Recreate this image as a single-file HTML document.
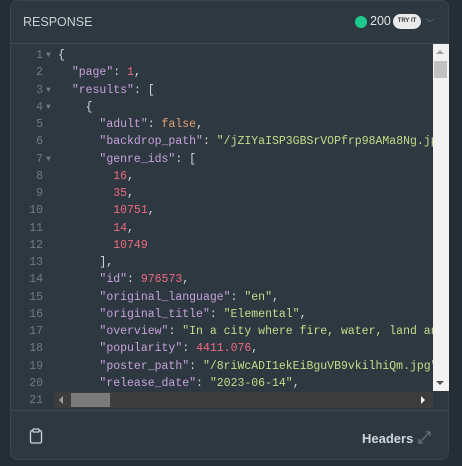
<!DOCTYPE html>
<html><head><style>
body{margin:0;width:462px;height:466px;background:#252e34;overflow:hidden;font-family:"Liberation Sans",sans-serif}
.panel{position:absolute;left:10px;top:0;width:439px;height:460px;background:#2e3840;border-radius:8px;border:1px solid #3a454d;box-sizing:border-box}
.hdr{position:absolute;left:0;top:0;right:0;height:42px;border-bottom:1px solid #3e4a52}
.title{position:absolute;left:12px;top:14px;color:#c9d0d4;font-size:12.5px}
.dot{position:absolute;left:344px;top:15px;width:12px;height:12px;border-radius:50%;background:#1ec98b}
.code200{position:absolute;left:359px;top:13px;color:#dfe4e7;font-size:12.5px}
.try{position:absolute;left:382px;top:13px;width:28px;height:15px;border-radius:8px;background:#e8eaec;color:#333;font-size:6px;line-height:15px;text-align:center;font-weight:bold}
.chev{position:absolute;left:414px;top:14px;color:#5f6b73;font-size:10px}
.code{position:absolute;left:0;top:43px;width:422px;height:366px;overflow:hidden;font-family:"Liberation Mono",monospace;font-size:11.5px;color:#d4d8db}
.ln{position:absolute;left:0;width:430px;height:17.25px;line-height:17.25px;white-space:pre}
.n{color:#6f7a82;position:absolute;left:0;width:32px;text-align:right}
.a{color:#6f7a82;position:absolute;left:35px;font-size:8px}
.t{position:absolute;left:47px}
.k{color:#c6a2dc}.s{color:#c3dd8b}.m{color:#ef6a80}.b{color:#e8a070}
.vs{position:absolute;left:422px;top:43px;width:16px;height:347px;background:#f2f2f2}
.hs{position:absolute;left:43px;top:391px;width:379px;height:16px;background:#3d3d3d}
.foot{position:absolute;left:0;top:409px;right:0;bottom:0;border-top:1px solid #3e4a52}
.hd{position:absolute;left:351px;top:20px;color:#d0d6da;font-size:13px;font-weight:bold}
</style></head><body>
<div class="panel">
<div class="hdr"><div class="title">RESPONSE</div><div class="dot"></div><div class="code200">200</div><div class="try">TRY IT</div><div class="chev">﹀</div></div>
<div class="code">
<div class="ln" style="top:3px"><span class="n">1</span><span class="a">▼</span><span class="t">{</span></div>
<div class="ln" style="top:20.25px"><span class="n">2</span><span class="t">  <span class="k">"page"</span>: <span class="m">1</span>,</span></div>
<div class="ln" style="top:37.5px"><span class="n">3</span><span class="a">▼</span><span class="t">  <span class="k">"results"</span>: [</span></div>
<div class="ln" style="top:54.75px"><span class="n">4</span><span class="a">▼</span><span class="t">    {</span></div>
<div class="ln" style="top:72px"><span class="n">5</span><span class="t">      <span class="k">"adult"</span>: <span class="b">false</span>,</span></div>
<div class="ln" style="top:89.25px"><span class="n">6</span><span class="t">      <span class="k">"backdrop_path"</span>: <span class="s">"/jZIYaISP3GBSrVOPfrp98AMa8Ng.jpg"</span>,</span></div>
<div class="ln" style="top:106.5px"><span class="n">7</span><span class="a">▼</span><span class="t">      <span class="k">"genre_ids"</span>: [</span></div>
<div class="ln" style="top:123.75px"><span class="n">8</span><span class="t">        <span class="m">16</span>,</span></div>
<div class="ln" style="top:141px"><span class="n">9</span><span class="t">        <span class="m">35</span>,</span></div>
<div class="ln" style="top:158.25px"><span class="n">10</span><span class="t">        <span class="m">10751</span>,</span></div>
<div class="ln" style="top:175.5px"><span class="n">11</span><span class="t">        <span class="m">14</span>,</span></div>
<div class="ln" style="top:192.75px"><span class="n">12</span><span class="t">        <span class="m">10749</span></span></div>
<div class="ln" style="top:210px"><span class="n">13</span><span class="t">      ],</span></div>
<div class="ln" style="top:227.25px"><span class="n">14</span><span class="t">      <span class="k">"id"</span>: <span class="m">976573</span>,</span></div>
<div class="ln" style="top:244.5px"><span class="n">15</span><span class="t">      <span class="k">"original_language"</span>: <span class="s">"en"</span>,</span></div>
<div class="ln" style="top:261.75px"><span class="n">16</span><span class="t">      <span class="k">"original_title"</span>: <span class="s">"Elemental"</span>,</span></div>
<div class="ln" style="top:279px"><span class="n">17</span><span class="t">      <span class="k">"overview"</span>: <span class="s">"In a city where fire, water, land and air</span></span></div>
<div class="ln" style="top:296.25px"><span class="n">18</span><span class="t">      <span class="k">"popularity"</span>: <span class="m">4411.076</span>,</span></div>
<div class="ln" style="top:313.5px"><span class="n">19</span><span class="t">      <span class="k">"poster_path"</span>: <span class="s">"/8riWcADI1ekEiBguVB9vkilhiQm.jpg"</span>,</span></div>
<div class="ln" style="top:330.75px"><span class="n">20</span><span class="t">      <span class="k">"release_date"</span>: <span class="s">"2023-06-14"</span>,</span></div>
<div class="ln" style="top:348px"><span class="n">21</span></div>
</div>
<div class="vs"><div style="position:absolute;left:3px;top:6px;border:4px solid transparent;border-bottom:4px solid #a0a0a0;border-top:0"></div><div style="position:absolute;left:1px;top:17px;width:13px;height:17px;background:#c1c1c1"></div><div style="position:absolute;left:3px;bottom:6px;border:4px solid transparent;border-top:4px solid #505050;border-bottom:0"></div></div>
<div class="hs"><div style="position:absolute;left:5px;top:4px;border:4px solid transparent;border-right:4px solid #a0a0a0;border-left:0"></div><div style="position:absolute;left:17px;top:1px;width:39px;height:14px;background:#7a7a7a"></div><div style="position:absolute;right:8px;top:4px;border:4px solid transparent;border-left:4px solid #f0f0f0;border-right:0"></div></div>
<div class="foot">
<svg style="position:absolute;left:18px;top:17px" width="14" height="16" viewBox="0 0 14 16"><rect x="1.5" y="2.5" width="11" height="12.5" rx="1.5" fill="none" stroke="#cfd5d9" stroke-width="1.3"/><rect x="4" y="1" width="6" height="3" rx="0.5" fill="#2e3840" stroke="#cfd5d9" stroke-width="1.2"/></svg>
<div class="hd">Headers</div>
<svg style="position:absolute;left:406px;top:19px" width="15" height="15" viewBox="0 0 15 15"><path d="M2 13L13 2M9 2H13V6M2 9V13H6" fill="none" stroke="#6b7780" stroke-width="1.2"/></svg>
</div>
</div>
</body></html>
